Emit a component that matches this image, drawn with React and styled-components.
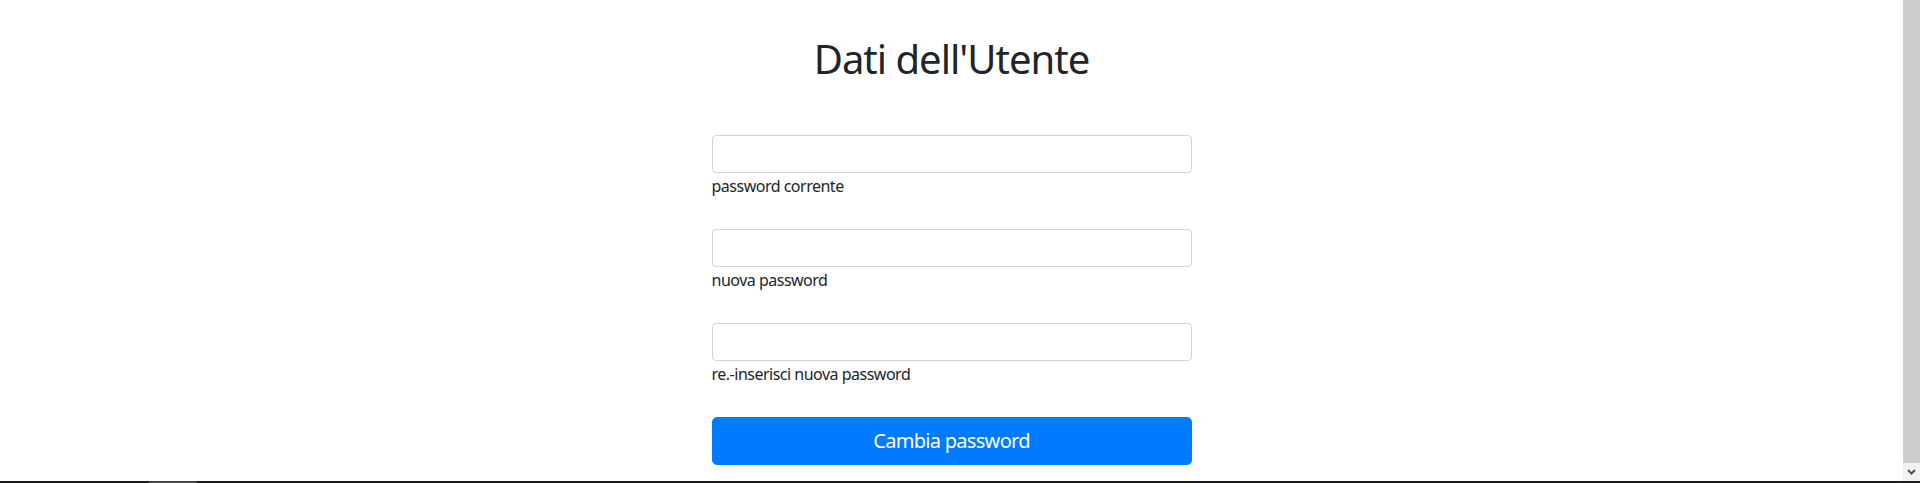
import styled, { createGlobalStyle } from 'styled-components';

const Global = createGlobalStyle`
  html, body {
    margin: 0;
    padding: 0;
    background: #fff;
  }
  body {
    font-family: "Noto Sans", "Open Sans", sans-serif;
    color: #212529;
    overflow: hidden;
  }
`

const Screen = styled.div`
  height: 483px;
  display: grid;
  grid-template-rows: 1fr 2px;
`

const Viewport = styled.div`
  display: grid;
  grid-template-columns: 1fr 17px;
  min-height: 0;
`

const Page = styled.main`
  display: flex;
  flex-direction: column;
  align-items: center;
  padding-top: 35px;
`

const Title = styled.h1`
  margin: 0 0 52px;
  font-size: 40px;
  font-weight: 400;
  line-height: 48px;
  letter-spacing: -1px;
`

const Form = styled.form`
  width: 480px;
  display: flex;
  flex-direction: column;
  gap: 31px;
`

const Field = styled.div`
  display: flex;
  flex-direction: column;
`

const Input = styled.input`
  box-sizing: border-box;
  height: 38px;
  width: 100%;
  border: 1px solid #ced4da;
  border-radius: 4px;
  padding: 6px 12px;
  font: inherit;
  outline: none;
`

const Label = styled.label`
  padding-top: 1px;
  font-size: 16px;
  line-height: 24px;
  letter-spacing: -0.5px;
`

const Button = styled.button`
  height: 48px;
  border: 1px solid #007bff;
  border-radius: 5px;
  background: #007bff;
  color: #fff;
  font-family: inherit;
  font-size: 20px;
  line-height: 30px;
  letter-spacing: -0.7px;
`

const Scrollbar = styled.div`
  display: grid;
  grid-template-rows: 1fr 18px;
  background: #f1f1f1;
`

const Thumb = styled.div`
  background: #cdcdcd;
`

const Arrow = styled.div`
  display: flex;
  align-items: center;
  justify-content: center;
  background: #f1f1f1;
`

const TaskBar = styled.div`
  background: #1b1b1b;
  display: flex;
  padding-left: 149px;
`

const TaskItem = styled.div`
  width: 48px;
  background: #454545;
`

const fields = [
  { id: 'current', label: 'password corrente' },
  { id: 'new', label: 'nuova password' },
  { id: 'repeat', label: 're.-inserisci nuova password' },
]

export default function App() {
  return (
    <Screen>
      <Global />
      <Viewport>
        <Page>
          <Title>Dati dell'Utente</Title>
          <Form onSubmit={e => e.preventDefault()}>
            {fields.map(f => (
              <Field key={f.id}>
                <Input id={f.id} type="password" />
                <Label htmlFor={f.id}>{f.label}</Label>
              </Field>
            ))}
            <Button type="submit">Cambia password</Button>
          </Form>
        </Page>
        <Scrollbar>
          <Thumb />
          <Arrow>
            <svg width="9" height="6" viewBox="0 0 9 6">
              <path d="M1 1 L4.5 4.5 L8 1" fill="none" stroke="#505050" strokeWidth="2" />
            </svg>
          </Arrow>
        </Scrollbar>
      </Viewport>
      <TaskBar>
        <TaskItem />
      </TaskBar>
    </Screen>
  )
}
